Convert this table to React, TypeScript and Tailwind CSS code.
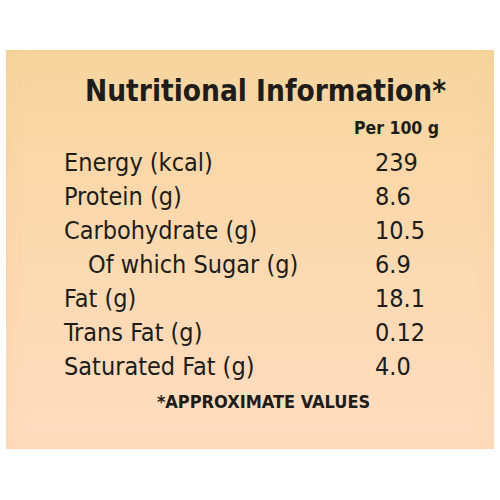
const rows: { label: string; value: string; indent?: boolean }[] = [
  { label: "Energy (kcal)", value: "239" },
  { label: "Protein (g)", value: "8.6" },
  { label: "Carbohydrate (g)", value: "10.5" },
  { label: "Of which Sugar (g)", value: "6.9", indent: true },
  { label: "Fat (g)", value: "18.1" },
  { label: "Trans Fat (g)", value: "0.12" },
  { label: "Saturated Fat (g)", value: "4.0" },
];

export default function App() {
  return (
    <div className="w-[500px] h-[500px] bg-white pt-[50px] px-[6px] font-['DejaVu_Sans_Condensed','Liberation_Sans',sans-serif] text-[#201c1a]">
      <div className="h-[399px] bg-[linear-gradient(180deg,#f7d59e_0%,#fbd9ae_45%,#ffdcc0_100%)] shadow-[inset_0_0_18px_rgba(240,200,140,0.25)]">
        <h1 className="pt-[26px] pl-[79px] text-[29.5px] leading-[30px] font-bold">
          Nutritional Information*
        </h1>
        <div className="pl-[348px] mt-[14px] text-[17.5px] leading-[17px] font-bold">
          Per 100 g
        </div>
        <div className="mt-[9px] pl-[58px]">
          {rows.map((r) => (
            <div key={r.label} className="flex h-[34px] items-center text-[25px] leading-[34px]">
              <span className={r.indent ? "w-[311px] pl-[24px]" : "w-[311px]"}>{r.label}</span>
              <span>{r.value}</span>
            </div>
          ))}
        </div>
        <div className="mt-[9px] text-center pl-[27px] text-[18px] leading-[18px] font-bold">
          *APPROXIMATE VALUES
        </div>
      </div>
    </div>
  );
}
